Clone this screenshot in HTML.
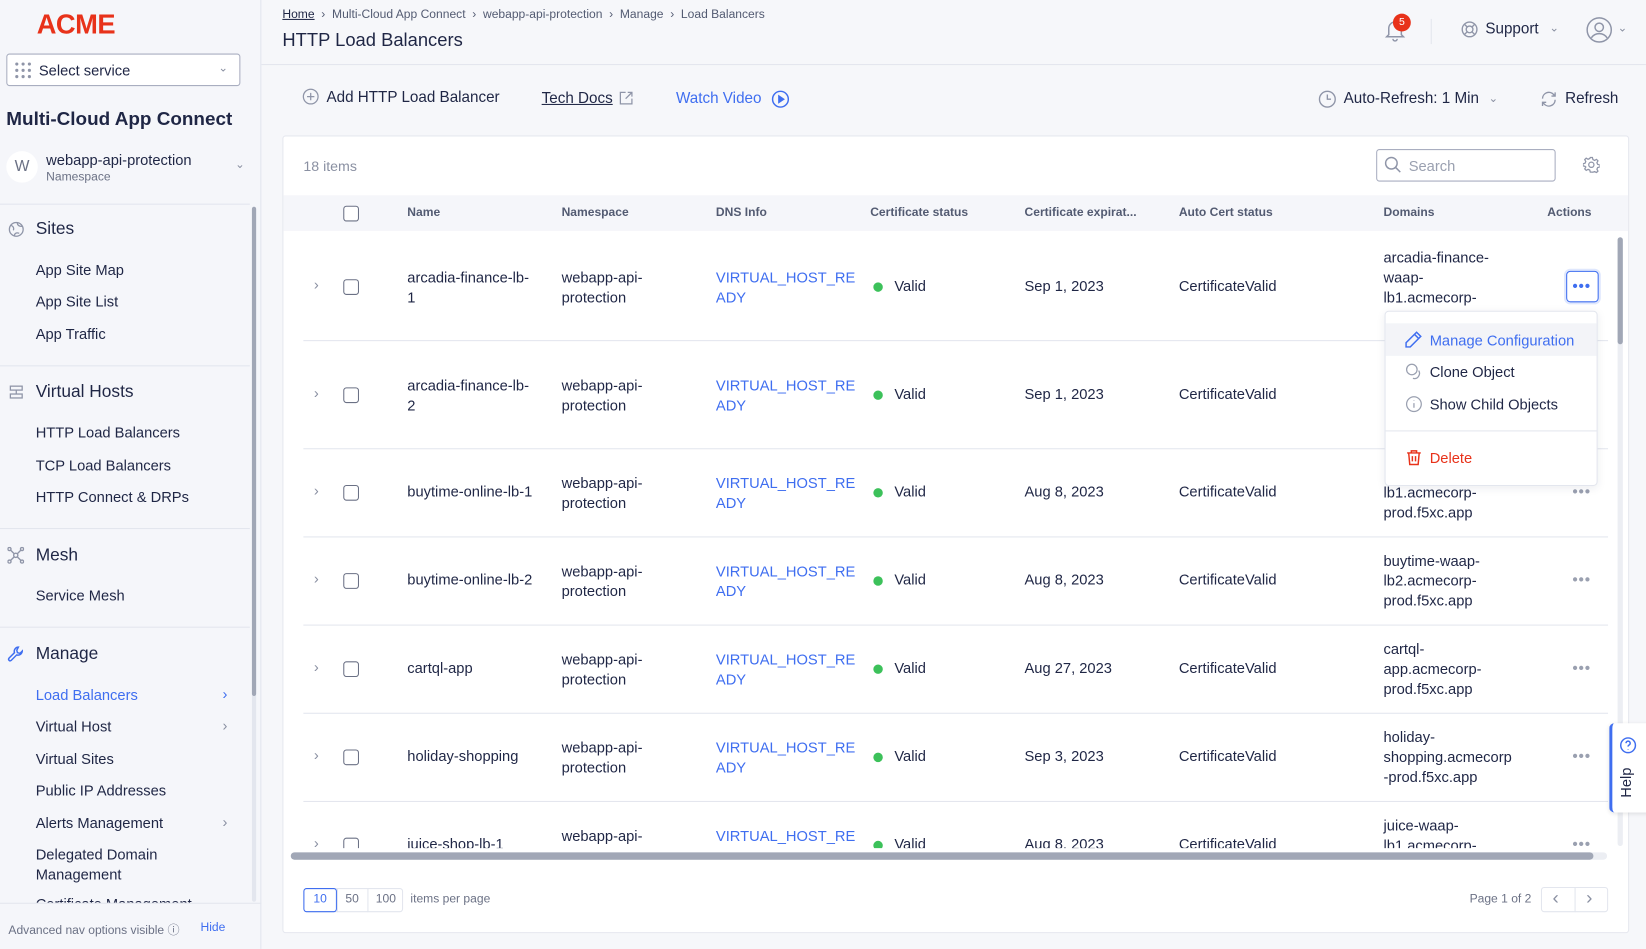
<!DOCTYPE html>
<html><head><meta charset="utf-8"><style>
*{box-sizing:border-box;margin:0;padding:0}
html,body{width:1646px;height:949px;overflow:hidden;background:#f6f7fa}
#w{width:1568px;height:904px;transform:scale(1.0497);transform-origin:0 0;position:relative;font-family:"Liberation Sans",sans-serif;color:#1f2645;font-size:14px}
.a{position:absolute;white-space:nowrap}
.nav{font-size:14px;color:#1f2645}
.blue,.nav.blue{color:#3f6ef0}
.sb{position:absolute;left:0;top:0;width:249px;height:904px;background:#f5f6fa;border-right:1px solid #e3e6ee}
.hl{position:absolute;height:1px;background:#e3e6ee}
.sec{font-size:16.5px;color:#1f2645}
.card{position:absolute;left:269px;top:129px;width:1283px;height:760px;background:#fff;border:1px solid #e6e8ef;border-radius:3px}
.th{font-size:11.5px;font-weight:bold;color:#535b72}
.cb{position:absolute;width:15px;height:15px;border:1.3px solid #6b7185;border-radius:3px;background:#fff}
.chev{position:absolute;color:#8a90a2;font-size:14px}
.dot{position:absolute;width:9px;height:9px;border-radius:50%;background:#3cc15a}
.more{position:absolute;color:#9aa0b0;font-size:14px;letter-spacing:1px;font-weight:bold}
svg{position:absolute}
</style></head><body><div id="w">

<div class="sb">
 <div class="a" style="left:35px;top:8px;font-size:26px;font-weight:bold;color:#e8321a;letter-spacing:-0.5px">ACME</div>
 <div class="a" style="left:6px;top:51px;width:223px;height:31px;border:1px solid #a9aec0;border-radius:3px;background:#fff"></div>
 <svg style="left:14px;top:59px" width="16" height="16" viewBox="0 0 16 16" fill="#8f95a8"><circle cx="2" cy="2" r="1.5"/><circle cx="8" cy="2" r="1.5"/><circle cx="14" cy="2" r="1.5"/><circle cx="2" cy="8" r="1.5"/><circle cx="8" cy="8" r="1.5"/><circle cx="14" cy="8" r="1.5"/><circle cx="2" cy="14" r="1.5"/><circle cx="8" cy="14" r="1.5"/><circle cx="14" cy="14" r="1.5"/></svg>
 <div class="a" style="left:37px;top:59px;font-size:14px">Select service</div>
 <div class="a" style="left:208px;top:58px;color:#8a90a2;font-size:11px">&#8964;</div>
 <div class="a" style="left:6px;top:103px;font-size:18px;font-weight:bold">Multi-Cloud App Connect</div>
 <div class="a" style="left:6px;top:144px;width:30px;height:30px;border-radius:50%;background:#fff;color:#6b7185;text-align:center;line-height:30px;font-size:15px">W</div>
 <div class="a" style="left:44px;top:144px;font-size:14px">webapp-api-protection</div>
 <div class="a" style="left:44px;top:163px;font-size:11.5px;color:#6b7185">Namespace</div>
 <div class="a" style="left:224px;top:150px;color:#8a90a2;font-size:11px">&#8964;</div>
 <div class="hl" style="left:0;top:194px;width:238px"></div>
 <svg style="left:8px;top:211px" width="15" height="15" viewBox="0 0 16 16" fill="none" stroke="#8f95a8" stroke-width="1.3"><circle cx="8" cy="8" r="7"/><path d="M3 4c2 1 3 3 2 5M9 1c0 3 2 4 5 4M6 15c0-3 2-4 5-3"/></svg>
 <div class="a sec" style="left:34px;top:209px">Sites</div>
 <div class="a nav" style="left:34px;top:249px">App Site Map</div>
 <div class="a nav" style="left:34px;top:279px">App Site List</div>
 <div class="a nav" style="left:34px;top:310px">App Traffic</div>
 <div class="hl" style="left:0;top:348px;width:238px"></div>
 <svg style="left:8px;top:366px" width="15" height="15" viewBox="0 0 16 16" fill="none" stroke="#8f95a8" stroke-width="1.3"><rect x="2" y="2" width="12" height="4"/><rect x="2" y="10" width="12" height="4"/><path d="M8 6v4"/></svg>
 <div class="a sec" style="left:34px;top:364px">Virtual Hosts</div>
 <div class="a nav" style="left:34px;top:404px">HTTP Load Balancers</div>
 <div class="a nav" style="left:34px;top:435px">TCP Load Balancers</div>
 <div class="a nav" style="left:34px;top:465px">HTTP Connect &amp; DRPs</div>
 <div class="hl" style="left:0;top:503px;width:238px"></div>
 <svg style="left:7px;top:521px" width="16" height="16" viewBox="0 0 16 16" fill="none" stroke="#8f95a8" stroke-width="1.3"><circle cx="8" cy="8" r="2"/><circle cx="2" cy="2" r="1.5"/><circle cx="14" cy="2" r="1.5"/><circle cx="2" cy="14" r="1.5"/><circle cx="14" cy="14" r="1.5"/><path d="M3 3l3.5 3.5M13 3l-3.5 3.5M3 13l3.5-3.5M13 13l-3.5-3.5"/></svg>
 <div class="a sec" style="left:34px;top:520px">Mesh</div>
 <div class="a nav" style="left:34px;top:559px">Service Mesh</div>
 <div class="hl" style="left:0;top:597px;width:238px"></div>
 <svg style="left:7px;top:615px" width="16" height="16" viewBox="0 0 16 16" fill="none" stroke="#3f6ef0" stroke-width="1.4"><path d="M10.5 1.5a4 4 0 0 0-3.7 5.3L1.5 12.1a1.5 1.5 0 0 0 2.1 2.1l5.3-5.3a4 4 0 0 0 5.3-3.7l-2.2 2.2-2.4-.6-.6-2.4z"/></svg>
 <div class="a sec" style="left:34px;top:614px">Manage</div>
 <div class="a nav blue" style="left:34px;top:654px;color:#3f6ef0">Load Balancers</div><div class="a" style="left:212px;top:653px;color:#3f6ef0">&#8250;</div>
 <div class="a nav" style="left:34px;top:684px">Virtual Host</div><div class="a" style="left:212px;top:683px;color:#8a90a2">&#8250;</div>
 <div class="a nav" style="left:34px;top:715px">Virtual Sites</div>
 <div class="a nav" style="left:34px;top:745px">Public IP Addresses</div>
 <div class="a nav" style="left:34px;top:776px">Alerts Management</div><div class="a" style="left:212px;top:775px;color:#8a90a2">&#8250;</div>
 <div class="a nav" style="left:34px;top:806px">Delegated Domain</div>
 <div class="a nav" style="left:34px;top:825px">Management</div>
 <div class="a" style="left:34px;top:855px;height:5px;overflow:hidden"><div style="margin-top:-2px;font-size:14px">Certificate Management</div></div>
 <div class="a" style="left:240px;top:197px;width:4px;height:662px;background:#e3e6ee;border-radius:2px"></div>
 <div class="a" style="left:240px;top:197px;width:4px;height:466px;background:#a1a7b6;border-radius:2px"></div>
 <div class="hl" style="left:0;top:860px;width:249px"></div>
 <div class="a" style="left:8px;top:878px;font-size:11.5px;color:#6b7185">Advanced nav options visible &#9432;</div>
 <div class="a blue" style="left:191px;top:878px;font-size:11.5px">Hide</div>
</div>

<div class="a" style="left:269px;top:8px;font-size:11.5px;color:#535b72"><span style="text-decoration:underline;color:#1f2645">Home</span> &nbsp;&#8250;&nbsp; Multi-Cloud App Connect &nbsp;&#8250;&nbsp; webapp-api-protection &nbsp;&#8250;&nbsp; Manage &nbsp;&#8250;&nbsp; Load Balancers</div>
<div class="a" style="left:269px;top:28px;font-size:17.5px">HTTP Load Balancers</div>
<svg style="left:1317px;top:16px" width="24" height="24" viewBox="0 0 24 24" fill="none" stroke="#8f95a8" stroke-width="1.4"><path d="M6 17V11a6 6 0 0 1 12 0v6l2 2H4z"/><path d="M10 21a2 2 0 0 0 4 0"/></svg>
<div class="a" style="left:1327px;top:13px;width:17px;height:17px;border-radius:50%;background:#e8321a;color:#fff;font-size:10px;text-align:center;line-height:17px">5</div>
<div class="a" style="left:1363px;top:18px;width:1px;height:24px;background:#e3e6ee"></div>
<svg style="left:1392px;top:20px" width="16" height="16" viewBox="0 0 16 16" fill="none" stroke="#8f95a8" stroke-width="1.3"><circle cx="8" cy="8" r="7"/><circle cx="8" cy="8" r="3.2"/><path d="M3 3l2.7 2.7M13 3l-2.7 2.7M3 13l2.7-2.7M13 13l-2.7-2.7"/></svg>
<div class="a" style="left:1415px;top:20px;font-size:14.5px">Support</div>
<div class="a" style="left:1476px;top:20px;color:#8a90a2;font-size:11px">&#8964;</div>
<svg style="left:1511px;top:16px" width="25" height="25" viewBox="0 0 25 25" fill="none" stroke="#8f95a8" stroke-width="1.4"><circle cx="12.5" cy="12.5" r="11.5"/><circle cx="12.5" cy="10" r="4"/><path d="M5 20c2-3 4.5-4 7.5-4s5.5 1 7.5 4"/></svg>
<div class="a" style="left:1541px;top:20px;color:#8a90a2;font-size:11px">&#8964;</div>
<div class="hl" style="left:249px;top:61px;width:1319px"></div>

<svg style="left:288px;top:84px" width="16" height="16" viewBox="0 0 16 16" fill="none" stroke="#8f95a8" stroke-width="1.2"><circle cx="8" cy="8" r="7"/><path d="M8 4.5v7M4.5 8h7"/></svg>
<div class="a" style="left:311px;top:85px;font-size:14.5px">Add HTTP Load Balancer</div>
<div class="a" style="left:516px;top:86px;font-size:14.5px;text-decoration:underline">Tech Docs</div>
<svg style="left:590px;top:87px" width="13" height="13" viewBox="0 0 13 13" fill="none" stroke="#8f95a8" stroke-width="1.2"><path d="M6 1H1v11h11V7M8 1h4v4M12 1L6 7"/></svg>
<div class="a blue" style="left:644px;top:86px;font-size:14.5px">Watch Video</div>
<svg style="left:735px;top:86px" width="17" height="17" viewBox="0 0 17 17" fill="none" stroke="#3f6ef0" stroke-width="1.4"><circle cx="8.5" cy="8.5" r="7.5"/><path d="M7 5.5v6l4.5-3z" fill="#3f6ef0"/></svg>
<svg style="left:1256px;top:86px" width="17" height="17" viewBox="0 0 17 17" fill="none" stroke="#8f95a8" stroke-width="1.3"><circle cx="8.5" cy="8.5" r="7.5"/><path d="M8.5 4v4.5H12"/></svg>
<div class="a" style="left:1280px;top:86px;font-size:14.5px">Auto-Refresh: 1 Min</div>
<div class="a" style="left:1418px;top:87px;color:#8a90a2;font-size:11px">&#8964;</div>
<svg style="left:1467px;top:86px" width="17" height="17" viewBox="0 0 17 17" fill="none" stroke="#8f95a8" stroke-width="1.3"><path d="M2.5 8a6 6 0 0 1 10.5-4l1.5 1.5M14.5 9a6 6 0 0 1-10.5 4L2.5 11.5M14.5 2v3.5H11M2.5 15v-3.5H6"/></svg>
<div class="a" style="left:1491px;top:86px;font-size:14.5px">Refresh</div>

<div class="card"></div>
<div class="a" style="left:289px;top:151px;font-size:13.5px;color:#8a90a2">18 items</div>
<div class="a" style="left:1311px;top:142px;width:171px;height:31px;border:1px solid #a9aec0;border-radius:3px"></div>
<svg style="left:1319px;top:149px" width="16" height="16" viewBox="0 0 16 16" fill="none" stroke="#8f95a8" stroke-width="1.4"><circle cx="6.5" cy="6.5" r="5.5"/><path d="M10.5 10.5L15 15"/></svg>
<div class="a" style="left:1342px;top:150px;font-size:14px;color:#9aa0b0">Search</div>
<svg style="left:1508px;top:149px" width="16" height="16" viewBox="0 0 16 16" fill="none" stroke="#8f95a8" stroke-width="1.2"><circle cx="8" cy="8" r="2.5"/><path d="M7 1h2l.5 2 1.6.8 1.8-1 1.4 1.4-1 1.8.7 1.6 2 .5v2l-2 .5-.7 1.6 1 1.8-1.4 1.4-1.8-1-1.6.7L9 15H7l-.5-2-1.6-.7-1.8 1-1.4-1.4 1-1.8L2 9.5 0 9V7l2-.5.7-1.6-1-1.8 1.4-1.4 1.8 1 1.6-.7z"/></svg>

<div class="a" style="left:270px;top:186px;width:1281px;height:34px;background:#f5f6fa"></div>
<div class="cb" style="left:327px;top:196px"></div>
<div class="a th" style="left:388px;top:197px">Name</div>
<div class="a th" style="left:535px;top:197px">Namespace</div>
<div class="a th" style="left:682px;top:197px">DNS Info</div>
<div class="a th" style="left:829px;top:197px">Certificate status</div>
<div class="a th" style="left:976px;top:197px">Certificate expirat...</div>
<div class="a th" style="left:1123px;top:197px">Auto Cert status</div>
<div class="a th" style="left:1318px;top:197px">Domains</div>
<div class="a th" style="left:1474px;top:197px">Actions</div>

<div class="a" style="left:270px;top:220px;width:1262px;height:588px;overflow:hidden">
<div style="position:absolute;left:-270px;top:-220px;width:1568px;height:904px">
<div class="hl" style="left:289px;top:324px;width:1243px"></div>
<div class="hl" style="left:289px;top:427px;width:1243px"></div>
<div class="hl" style="left:289px;top:511px;width:1243px"></div>
<div class="hl" style="left:289px;top:595px;width:1243px"></div>
<div class="hl" style="left:289px;top:679px;width:1243px"></div>
<div class="hl" style="left:289px;top:763px;width:1243px"></div>
<div style="position:absolute;left:0;top:264px">
 <div class="chev" style="left:299px;top:-1px">&#8250;</div><div class="cb" style="left:327px;top:2px"></div>
 <div class="a" style="left:388px;top:-9px;line-height:19px">arcadia-finance-lb-<br>1</div>
 <div class="a" style="left:535px;top:-9px;line-height:19px">webapp-api-<br>protection</div>
 <div class="a blue" style="left:682px;top:-9px;line-height:19px">VIRTUAL_HOST_RE<br>ADY</div>
 <div class="dot" style="left:832px;top:5px"></div><div class="a" style="left:852px;top:0">Valid</div>
 <div class="a" style="left:976px;top:0">Sep 1, 2023</div><div class="a" style="left:1123px;top:0">CertificateValid</div>
 <div class="a" style="left:1318px;top:-28px;line-height:19px">arcadia-finance-<br>waap-<br>lb1.acmecorp-</div>
</div>
<div style="position:absolute;left:0;top:367px">
 <div class="chev" style="left:299px;top:-1px">&#8250;</div><div class="cb" style="left:327px;top:2px"></div>
 <div class="a" style="left:388px;top:-9px;line-height:19px">arcadia-finance-lb-<br>2</div>
 <div class="a" style="left:535px;top:-9px;line-height:19px">webapp-api-<br>protection</div>
 <div class="a blue" style="left:682px;top:-9px;line-height:19px">VIRTUAL_HOST_RE<br>ADY</div>
 <div class="dot" style="left:832px;top:5px"></div><div class="a" style="left:852px;top:0">Valid</div>
 <div class="a" style="left:976px;top:0">Sep 1, 2023</div><div class="a" style="left:1123px;top:0">CertificateValid</div>
</div>
<div style="position:absolute;left:0;top:460px">
 <div class="chev" style="left:299px;top:-1px">&#8250;</div><div class="cb" style="left:327px;top:2px"></div>
 <div class="a" style="left:388px;top:0">buytime-online-lb-1</div>
 <div class="a" style="left:535px;top:-9px;line-height:19px">webapp-api-<br>protection</div>
 <div class="a blue" style="left:682px;top:-9px;line-height:19px">VIRTUAL_HOST_RE<br>ADY</div>
 <div class="dot" style="left:832px;top:5px"></div><div class="a" style="left:852px;top:0">Valid</div>
 <div class="a" style="left:976px;top:0">Aug 8, 2023</div><div class="a" style="left:1123px;top:0">CertificateValid</div>
 <div class="a" style="left:1318px;top:0;line-height:19px">lb1.acmecorp-<br>prod.f5xc.app</div>
 <div class="more" style="left:1498px;top:0px">&bull;&bull;&bull;</div>
</div>
<div style="position:absolute;left:0;top:544px">
 <div class="chev" style="left:299px;top:-1px">&#8250;</div><div class="cb" style="left:327px;top:2px"></div>
 <div class="a" style="left:388px;top:0">buytime-online-lb-2</div>
 <div class="a" style="left:535px;top:-9px;line-height:19px">webapp-api-<br>protection</div>
 <div class="a blue" style="left:682px;top:-9px;line-height:19px">VIRTUAL_HOST_RE<br>ADY</div>
 <div class="dot" style="left:832px;top:5px"></div><div class="a" style="left:852px;top:0">Valid</div>
 <div class="a" style="left:976px;top:0">Aug 8, 2023</div><div class="a" style="left:1123px;top:0">CertificateValid</div>
 <div class="a" style="left:1318px;top:-19px;line-height:19px">buytime-waap-<br>lb2.acmecorp-<br>prod.f5xc.app</div>
 <div class="more" style="left:1498px;top:0px">&bull;&bull;&bull;</div>
</div>
<div style="position:absolute;left:0;top:628px">
 <div class="chev" style="left:299px;top:-1px">&#8250;</div><div class="cb" style="left:327px;top:2px"></div>
 <div class="a" style="left:388px;top:0">cartql-app</div>
 <div class="a" style="left:535px;top:-9px;line-height:19px">webapp-api-<br>protection</div>
 <div class="a blue" style="left:682px;top:-9px;line-height:19px">VIRTUAL_HOST_RE<br>ADY</div>
 <div class="dot" style="left:832px;top:5px"></div><div class="a" style="left:852px;top:0">Valid</div>
 <div class="a" style="left:976px;top:0">Aug 27, 2023</div><div class="a" style="left:1123px;top:0">CertificateValid</div>
 <div class="a" style="left:1318px;top:-19px;line-height:19px">cartql-<br>app.acmecorp-<br>prod.f5xc.app</div>
 <div class="more" style="left:1498px;top:0px">&bull;&bull;&bull;</div>
</div>
<div style="position:absolute;left:0;top:712px">
 <div class="chev" style="left:299px;top:-1px">&#8250;</div><div class="cb" style="left:327px;top:2px"></div>
 <div class="a" style="left:388px;top:0">holiday-shopping</div>
 <div class="a" style="left:535px;top:-9px;line-height:19px">webapp-api-<br>protection</div>
 <div class="a blue" style="left:682px;top:-9px;line-height:19px">VIRTUAL_HOST_RE<br>ADY</div>
 <div class="dot" style="left:832px;top:5px"></div><div class="a" style="left:852px;top:0">Valid</div>
 <div class="a" style="left:976px;top:0">Sep 3, 2023</div><div class="a" style="left:1123px;top:0">CertificateValid</div>
 <div class="a" style="left:1318px;top:-19px;line-height:19px">holiday-<br>shopping.acmecorp<br>-prod.f5xc.app</div>
 <div class="more" style="left:1498px;top:0px">&bull;&bull;&bull;</div>
</div>
<div style="position:absolute;left:0;top:796px">
 <div class="chev" style="left:299px;top:-1px">&#8250;</div><div class="cb" style="left:327px;top:2px"></div>
 <div class="a" style="left:388px;top:0">juice-shop-lb-1</div>
 <div class="a" style="left:535px;top:-9px;line-height:19px">webapp-api-<br>protection</div>
 <div class="a blue" style="left:682px;top:-9px;line-height:19px">VIRTUAL_HOST_RE<br>ADY</div>
 <div class="dot" style="left:832px;top:5px"></div><div class="a" style="left:852px;top:0">Valid</div>
 <div class="a" style="left:976px;top:0">Aug 8, 2023</div><div class="a" style="left:1123px;top:0">CertificateValid</div>
 <div class="a" style="left:1318px;top:-19px;line-height:19px">juice-waap-<br>lb1.acmecorp-</div>
 <div class="more" style="left:1498px;top:0px">&bull;&bull;&bull;</div>
</div>
</div></div>

<div class="a" style="left:1541px;top:226px;width:5px;height:580px;background:#eceef3;border-radius:3px"></div>
<div class="a" style="left:1541px;top:226px;width:5px;height:102px;background:#a1a7b6;border-radius:3px"></div>
<div class="a" style="left:277px;top:812px;width:1254px;height:7px;background:#eceef3;border-radius:4px"></div>
<div class="a" style="left:277px;top:812px;width:1241px;height:7px;background:#a1a7b6;border-radius:4px"></div>

<div class="a" style="left:1492px;top:258px;width:31px;height:30px;border:1.5px solid #3f6ef0;border-radius:4px;background:#fff;box-shadow:0 0 0 2px #dfe7fd"></div>
<div class="a" style="left:1498px;top:264px;color:#3f6ef0;font-weight:bold;font-size:14px;letter-spacing:1px">&bull;&bull;&bull;</div>

<div class="a" style="left:1319px;top:296px;width:203px;height:167px;background:#fff;border:1px solid #e3e6ee;border-radius:4px;box-shadow:0 2px 8px rgba(30,40,80,.08)"></div>
<div class="a" style="left:1320px;top:308px;width:201px;height:31px;background:#f3f4f8"></div>
<svg style="left:1338px;top:315px" width="17" height="17" viewBox="0 0 17 17" fill="none" stroke="#3f6ef0" stroke-width="1.4"><path d="M11.5 1.5l4 4L5.5 15.5H1.5v-4zM9.5 3.5l4 4"/></svg>
<div class="a blue" style="left:1362px;top:316px">Manage Configuration</div>
<svg style="left:1339px;top:346px" width="16" height="16" viewBox="0 0 16 16" fill="none" stroke="#9aa0b0" stroke-width="1.2"><circle cx="6" cy="6" r="5"/><path d="M12.5 7a5 5 0 0 1-5.5 7.5"/></svg>
<div class="a" style="left:1362px;top:346px">Clone Object</div>
<svg style="left:1339px;top:377px" width="16" height="16" viewBox="0 0 16 16" fill="none" stroke="#9aa0b0" stroke-width="1.2"><circle cx="8" cy="8" r="7"/><path d="M8 7v4.5M8 4.5v.5"/></svg>
<div class="a" style="left:1362px;top:377px">Show Child Objects</div>
<div class="a" style="left:1320px;top:410px;width:201px;height:1px;background:#e3e6ee"></div>
<svg style="left:1339px;top:428px" width="16" height="16" viewBox="0 0 16 16" fill="none" stroke="#e8321a" stroke-width="1.4"><path d="M1.5 3.5h13M5.5 3.5V1.5h5v2M3 3.5l1 11h8l1-11M6.5 6.5v5M9.5 6.5v5"/></svg>
<div class="a" style="left:1362px;top:428px;color:#e8321a">Delete</div>

<div class="a" style="left:289px;top:846px;width:95px;height:23px;border:1px solid #e3e6ee;border-radius:3px"></div>
<div class="a" style="left:289px;top:846px;width:32px;height:23px;border:1px solid #3f6ef0;border-radius:3px;color:#3f6ef0;font-size:11.5px;text-align:center;line-height:21px">10</div>
<div class="a" style="left:321px;top:846px;width:1px;height:23px;background:#e3e6ee"></div>
<div class="a" style="left:350px;top:846px;width:1px;height:23px;background:#e3e6ee"></div>
<div class="a" style="left:329px;top:851px;font-size:11.5px;color:#6b7185">50</div>
<div class="a" style="left:358px;top:851px;font-size:11.5px;color:#6b7185">100</div>
<div class="a" style="left:391px;top:851px;font-size:11.5px;color:#6b7185">items per page</div>
<div class="a" style="left:1400px;top:851px;font-size:11.5px;color:#6b7185">Page 1 of 2</div>
<div class="a" style="left:1468px;top:845px;width:64px;height:24px;border:1px solid #e3e6ee;border-radius:3px"></div>
<div class="a" style="left:1500px;top:845px;width:1px;height:24px;background:#e3e6ee"></div>
<div class="a" style="left:1479px;top:845px;color:#8a90a2;font-size:18px">&#8249;</div>
<div class="a" style="left:1511px;top:845px;color:#8a90a2;font-size:18px">&#8250;</div>

<div class="a" style="left:1533px;top:689px;width:40px;height:85px;background:#fff;border-left:3px solid #3f6ef0;border-radius:5px 0 0 5px;box-shadow:0 1px 4px rgba(0,0,0,.1)"></div>
<svg style="left:1543px;top:702px" width="16" height="16" viewBox="0 0 16 16" fill="none" stroke="#3f6ef0" stroke-width="1.4"><circle cx="8" cy="8" r="7"/><path d="M6 6a2 2 0 1 1 2.5 2c-.5.2-.5.7-.5 1.3M8 11.5v.5"/></svg>
<div class="a" style="left:1541px;top:760px;transform:rotate(-90deg);transform-origin:0 0;font-size:14px">Help</div>

</div></body></html>
